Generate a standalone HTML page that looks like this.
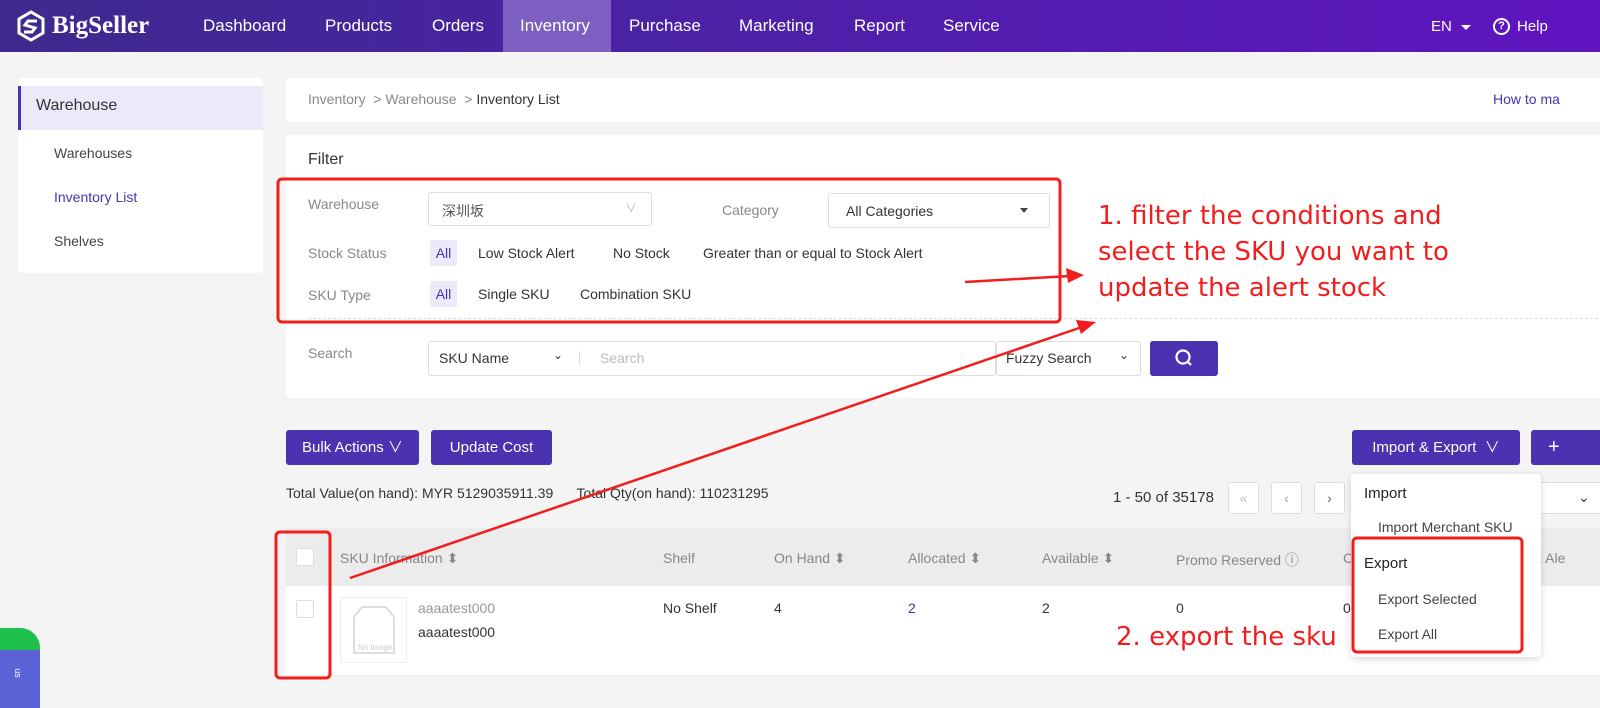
<!DOCTYPE html>
<html><head><meta charset="utf-8"><style>
*{box-sizing:border-box;margin:0;padding:0}
body{width:1600px;height:701px;overflow:hidden;background:#f4f4f4;font-family:"Liberation Sans","Noto Sans CJK SC",sans-serif;font-size:14px;color:#333;position:relative}
.a{position:absolute;white-space:nowrap}
.hdr{position:absolute;left:0;top:0;width:1600px;height:52px;background:linear-gradient(90deg,#3e2a8e,#4a22a4 40%,#5f14bf)}
.nav{color:#fff;font-size:17px;top:16px}
.card{position:absolute;background:#fff;border-radius:4px}
.lbl{color:#888;font-size:14px}
.btn{position:absolute;background:#4b32b0;color:#fff;border-radius:3px;font-size:15px;text-align:center}
.inp{position:absolute;background:#fff;border:1px solid #ddd;border-radius:3px}
.tag{position:absolute;background:#ece9fb;color:#4b32b0;border-radius:2px;text-align:center}
.th{color:#888;font-size:14px;top:550px}
.red{color:#f21d1d;font-size:26px;font-family:"DejaVu Sans",sans-serif}
</style></head><body>
<div class="hdr"></div>
<svg class="a" style="left:16px;top:10px" width="30" height="32" viewBox="0 0 30 32"><path d="M15 2 L27 9 L27 23 L15 30 L3 23 L3 9 Z" fill="none" stroke="#fff" stroke-width="3"/><path d="M21 11 L12 11 L9 15 L19 18 L16 22 L8 22" fill="none" stroke="#fff" stroke-width="3"/></svg>
<div class="a" style="left:52px;top:12px;color:#fff;font-family:'Liberation Serif',serif;font-weight:bold;font-size:25px">BigSeller</div>
<div class="a nav" style="left:203px">Dashboard</div>
<div class="a nav" style="left:325px">Products</div>
<div class="a nav" style="left:432px">Orders</div>
<div class="a" style="left:503px;top:0;width:108px;height:52px;background:#7c5fc0"></div>
<div class="a nav" style="left:520px">Inventory</div>
<div class="a nav" style="left:629px">Purchase</div>
<div class="a nav" style="left:739px">Marketing</div>
<div class="a nav" style="left:854px">Report</div>
<div class="a nav" style="left:943px">Service</div>
<div class="a nav" style="left:1431px;font-size:15px;top:18px">EN</div>
<div class="a" style="left:1461px;top:25px;border-left:5px solid transparent;border-right:5px solid transparent;border-top:5px solid #fff"></div>
<div class="a" style="left:1493px;top:18px;width:17px;height:17px;border:2px solid #fff;border-radius:50%;color:#fff;font-size:11px;font-weight:bold;text-align:center;line-height:13px">?</div>
<div class="a nav" style="left:1517px;font-size:15px;top:18px">Help</div>

<div class="card" style="left:18px;top:78px;width:245px;height:195px"></div>
<div class="a" style="left:18px;top:86px;width:245px;height:44px;background:#ece9fb;border-left:3px solid #4b32b0"></div>
<div class="a" style="left:36px;top:97px;font-size:16px;color:#333">Warehouse</div>
<div class="a" style="left:54px;top:145px;color:#444">Warehouses</div>
<div class="a" style="left:54px;top:189px;color:#4b32b0">Inventory List</div>
<div class="a" style="left:54px;top:233px;color:#444">Shelves</div>

<div class="card" style="left:286px;top:78px;width:1330px;height:44px"></div>
<div class="a" style="left:308px;top:91px;color:#888">Inventory &nbsp;&gt; Warehouse &nbsp;&gt; <span style="color:#333">Inventory List</span></div>
<div class="a" style="left:1493px;top:91px;color:#4b32b0">How to ma</div>

<div class="card" style="left:286px;top:135px;width:1330px;height:263px"></div>
<div class="a" style="left:308px;top:151px;font-size:16px;color:#333">Filter</div>
<div class="a lbl" style="left:308px;top:196px">Warehouse</div>
<div class="inp" style="left:428px;top:192px;width:224px;height:34px"></div>
<div class="a" style="left:442px;top:201px;color:#555">深圳坂</div>
<div class="a" style="left:625px;top:199px;color:#bbb;font-size:12px">∨</div>
<div class="a lbl" style="left:722px;top:202px">Category</div>
<div class="inp" style="left:828px;top:193px;width:222px;height:35px"></div>
<div class="a" style="left:846px;top:203px;color:#333">All Categories</div>
<div class="a" style="left:1020px;top:208px;border-left:4px solid transparent;border-right:4px solid transparent;border-top:5px solid #444"></div>
<div class="a lbl" style="left:308px;top:245px">Stock Status</div>
<div class="tag" style="left:430px;top:240px;width:27px;height:26px;line-height:26px">All</div>
<div class="a" style="left:478px;top:245px">Low Stock Alert</div>
<div class="a" style="left:613px;top:245px">No Stock</div>
<div class="a" style="left:703px;top:245px">Greater than or equal to Stock Alert</div>
<div class="a lbl" style="left:308px;top:287px">SKU Type</div>
<div class="tag" style="left:430px;top:281px;width:27px;height:26px;line-height:26px">All</div>
<div class="a" style="left:478px;top:286px">Single SKU</div>
<div class="a" style="left:580px;top:286px">Combination SKU</div>
<div class="a" style="left:308px;top:318px;width:1290px;border-top:1px dashed #ddd"></div>
<div class="a lbl" style="left:308px;top:345px">Search</div>
<div class="inp" style="left:428px;top:341px;width:568px;height:35px"></div>
<div class="a" style="left:439px;top:350px">SKU Name</div>
<div class="a" style="left:553px;top:348px;font-size:12px">⌄</div>
<div class="a" style="left:579px;top:351px;height:14px;border-left:1px solid #ddd"></div>
<div class="a" style="left:600px;top:350px;color:#bbb">Search</div>
<div class="inp" style="left:996px;top:341px;width:145px;height:35px"></div>
<div class="a" style="left:1006px;top:350px">Fuzzy Search</div>
<div class="a" style="left:1119px;top:348px;font-size:12px">⌄</div>
<div class="btn" style="left:1150px;top:341px;width:68px;height:35px"></div>
<svg class="a" style="left:1174px;top:348px" width="20" height="20" viewBox="0 0 20 20"><circle cx="9" cy="9" r="6.5" fill="none" stroke="#fff" stroke-width="2.2"/><path d="M13.5 13.5 L17 17" stroke="#fff" stroke-width="2.2"/></svg>

<div class="btn" style="left:286px;top:430px;width:133px;height:35px;line-height:35px">Bulk Actions ∨</div>
<div class="btn" style="left:431px;top:430px;width:121px;height:35px;line-height:35px">Update Cost</div>
<div class="btn" style="left:1352px;top:430px;width:168px;height:35px;line-height:35px">Import &amp; Export &nbsp;∨</div>
<div class="btn" style="left:1531px;top:430px;width:80px;height:35px;line-height:35px;text-align:left;padding-left:17px;font-size:20px">+</div>
<div class="a" style="left:286px;top:485px">Total Value(on hand): MYR 5129035911.39 &nbsp; &nbsp; &nbsp;Total Qty(on hand): 110231295</div>
<div class="a" style="left:1113px;top:489px;font-size:15px">1 - 50 of 35178</div>
<div class="inp" style="left:1228px;top:482px;width:31px;height:32px;color:#bbb;text-align:center;line-height:30px">«</div>
<div class="inp" style="left:1271px;top:482px;width:31px;height:32px;color:#999;text-align:center;line-height:30px">‹</div>
<div class="inp" style="left:1314px;top:482px;width:31px;height:32px;color:#666;text-align:center;line-height:30px">›</div>
<div class="inp" style="left:1520px;top:482px;width:90px;height:32px"></div>
<div class="a" style="left:1578px;top:489px">⌄</div>

<div class="a" style="left:286px;top:528px;width:1330px;height:58px;background:#ececec"></div>
<div class="a" style="left:286px;top:586px;width:1330px;height:90px;background:#fff;border-bottom:1px solid #eee"></div>
<div class="a" style="left:296px;top:548px;width:18px;height:18px;background:#fff;border:1px solid #ddd;border-radius:2px"></div>
<div class="a" style="left:296px;top:600px;width:18px;height:18px;background:#fff;border:1px solid #ddd;border-radius:2px"></div>
<div class="a th" style="left:340px">SKU Information ⬍</div>
<div class="a th" style="left:663px">Shelf</div>
<div class="a th" style="left:774px">On Hand ⬍</div>
<div class="a th" style="left:908px">Allocated ⬍</div>
<div class="a th" style="left:1042px">Available ⬍</div>
<div class="a th" style="left:1176px">Promo Reserved ⓘ</div>
<div class="a th" style="left:1343px">C</div>
<div class="a th" style="left:1535px">k Ale</div>
<div class="a" style="left:340px;top:597px;width:67px;height:66px;border:1px solid #eee"></div>
<svg class="a" style="left:350px;top:605px" width="48" height="52"><path d="M4 12 L12 2 L36 2 L44 12 L44 48 L4 48 Z" fill="none" stroke="#ddd" stroke-width="2"/><text x="8" y="45" font-size="8" fill="#ccc" font-family="Liberation Sans">No Image</text></svg>
<div class="a" style="left:418px;top:600px;color:#999">aaaatest000</div>
<div class="a" style="left:418px;top:624px">aaaatest000</div>
<div class="a" style="left:663px;top:600px">No Shelf</div>
<div class="a" style="left:774px;top:600px">4</div>
<div class="a" style="left:908px;top:600px;color:#4b32b0">2</div>
<div class="a" style="left:1042px;top:600px">2</div>
<div class="a" style="left:1176px;top:600px">0</div>
<div class="a" style="left:1343px;top:600px">0</div>

<div class="a" style="left:1351px;top:474px;width:190px;height:183px;background:#fff;border-radius:4px;box-shadow:0 2px 8px rgba(0,0,0,.15)"></div>
<div class="a" style="left:1364px;top:485px;font-size:15px;color:#222">Import</div>
<div class="a" style="left:1378px;top:519px;color:#444">Import Merchant SKU</div>
<div class="a" style="left:1364px;top:555px;font-size:15px;color:#222">Export</div>
<div class="a" style="left:1378px;top:591px;color:#444">Export Selected</div>
<div class="a" style="left:1378px;top:626px;color:#444">Export All</div>

<div class="a red" style="left:1098px;top:198px;line-height:36px">1. filter the conditions and<br>select the SKU you want to<br>update the alert stock</div>
<div class="a red" style="left:1116px;top:622px">2. export the sku</div>

<div class="a" style="left:0;top:628px;width:40px;height:80px;background:#5b63d6;border-radius:0 20px 0 0;overflow:hidden"><div style="width:40px;height:22px;background:#1ec24a;border-radius:0 20px 0 0"></div></div>
<div class="a" style="left:13px;top:668px;color:#fff;font-size:9px;transform:rotate(90deg)">us</div>

<svg class="a" style="left:0;top:0" width="1600" height="701">
<g fill="none" stroke="#f21d1d" stroke-width="3">
<rect x="278" y="179" width="782" height="143" rx="4"/>
<rect x="276" y="532" width="54" height="146" rx="4"/>
<rect x="1353" y="538" width="169" height="114" rx="4"/>
</g>
<path d="M965 282 L1070 276" stroke="#f21d1d" stroke-width="2.5"/>
<path d="M1084 275 L1066 268 L1068 283 Z" fill="#f21d1d"/>
<path d="M350 578 L1082 327" stroke="#f21d1d" stroke-width="2.5"/>
<path d="M1096 322 L1076 320 L1081 334 Z" fill="#f21d1d"/>
</svg>
</body></html>
